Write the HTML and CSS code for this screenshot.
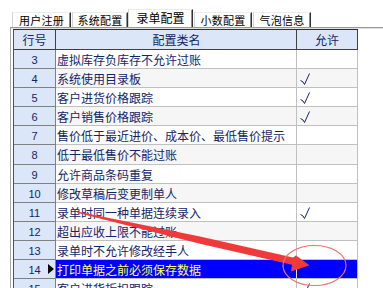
FILE: index.html
```html
<!DOCTYPE html>
<html lang="zh-CN">
<head>
  <meta charset="UTF-8">
  <title>录单配置</title>
  <link rel="stylesheet" href="styles.css">
</head>
<body>
  <div class="tabs">
    <div class="tab t1">用户注册</div>
    <div class="tab t2">系统配置</div>
    <div class="tab active">录单配置</div>
    <div class="tab t4">小数配置</div>
    <div class="tab t5">气泡信息</div>
  </div>
  <div class="panel">
    <div class="grid">
      <div class="row head">
        <div class="cell num">行号</div>
        <div class="cell name">配置类名</div>
        <div class="cell allow">允许</div>
      </div>
      <div class="row odd"><div class="cell num">3</div><div class="cell name">虚拟库存负库存不允许过账</div><div class="cell allow"></div></div>
      <div class="row even"><div class="cell num">4</div><div class="cell name">系统使用目录板</div><div class="cell allow"><svg class="tick" viewBox="0 0 10 12"><path d="M0.5 7.5 L3 9 L4.5 11.5 L9.5 0.5"/></svg></div></div>
      <div class="row odd"><div class="cell num">5</div><div class="cell name">客户进货价格跟踪</div><div class="cell allow"><svg class="tick" viewBox="0 0 10 12"><path d="M0.5 7.5 L3 9 L4.5 11.5 L9.5 0.5"/></svg></div></div>
      <div class="row even"><div class="cell num">6</div><div class="cell name">客户销售价格跟踪</div><div class="cell allow"><svg class="tick" viewBox="0 0 10 12"><path d="M0.5 7.5 L3 9 L4.5 11.5 L9.5 0.5"/></svg></div></div>
      <div class="row odd"><div class="cell num">7</div><div class="cell name">售价低于最近进价、成本价、最低售价提示</div><div class="cell allow"></div></div>
      <div class="row even"><div class="cell num">8</div><div class="cell name">低于最低售价不能过账</div><div class="cell allow"></div></div>
      <div class="row odd"><div class="cell num">9</div><div class="cell name">允许商品条码重复</div><div class="cell allow"></div></div>
      <div class="row even"><div class="cell num">10</div><div class="cell name">修改草稿后变更制单人</div><div class="cell allow"></div></div>
      <div class="row odd"><div class="cell num">11</div><div class="cell name">录单时同一种单据连续录入</div><div class="cell allow"><svg class="tick" viewBox="0 0 10 12"><path d="M0.5 7.5 L3 9 L4.5 11.5 L9.5 0.5"/></svg></div></div>
      <div class="row even"><div class="cell num">12</div><div class="cell name">超出应收上限不能过账</div><div class="cell allow"></div></div>
      <div class="row odd"><div class="cell num">13</div><div class="cell name">录单时不允许修改经手人</div><div class="cell allow"></div></div>
      <div class="row sel"><div class="cell num">14<span class="pointer"></span></div><div class="cell name">打印单据之前必须保存数据</div><div class="cell allow"></div></div>
      <div class="row odd"><div class="cell num">15</div><div class="cell name">客户进货折扣跟踪</div><div class="cell allow"><svg class="tick" viewBox="0 0 10 12"><path d="M0.5 7.5 L3 9 L4.5 11.5 L9.5 0.5"/></svg></div></div>
    </div>
  </div>

  <!-- red annotation drawn over the screenshot -->
  <svg class="marks" width="383" height="288" viewBox="0 0 383 288">
    <polygon class="arrow" points="76,211.3 200,236.6 293,257.6 296,255.5 309.5,265.3 291,271.5 292,264.8 200,243.8 78,213"/>
    <ellipse class="ring" cx="314.5" cy="265.5" rx="31.5" ry="20"/>
  </svg>
</body>
</html>
```

FILE: styles.css
```css
* {
  box-sizing: border-box;
}
body {
  margin: 0;
  width: 383px;
  height: 288px;
  overflow: hidden;
  position: relative;
  background: #fff;
  font-family: "Noto Sans CJK SC", sans-serif;
  color: #14246a;
}
.tabs {
  display: flex;
  align-items: flex-end;
  height: 27px;
  padding-left: 12px;
}
.tab {
  height: 15px;
  font-size: 11px;
  line-height: 14px;
  letter-spacing: 0.3px;
  color: #000;
  text-align: center;
  border-top: 1px solid #ececec;
  border-left: 1px solid #d4d4d4;
  border-right: 1px solid #303030;
  box-shadow: inset -1px 0 #909090;
  margin-right: 1px;
}
.t1 { width: 59px; }
.t2 { width: 56px; margin-right: 0; }
.tab.active {
  width: 65px;
  height: 18px;
  font-size: 12px;
  line-height: 16px;
  letter-spacing: 0;
}
.t4 { width: 58px; }
.t5 { width: 58px; }
.panel {
  margin-left: 10px;
  border-top: 1px solid #9a9a9a;
  border-left: 1px solid #a8a8a8;
  padding: 1px 0 0 2px;
  box-shadow: inset 0 1px #dedede;
  height: 300px;
}
.grid {
  width: 345px;
  border-top: 1px solid #303030;
  border-left: 1px solid #505050;
}
.row {
  display: grid;
  grid-template-columns: 42px 241px 61px;
  height: 19.1px;
}
.cell {
  border-right: 1px solid #c0c0c0;
  border-bottom: 1px solid #c0c0c0;
  font-size: 12px;
  line-height: 18px;
  white-space: nowrap;
  overflow: hidden;
}
.cell.name {
  padding: 1px 0 0 1px;
}
.cell.num {
  position: relative;
  background: #dbe7f8;
  border-color: #808080;
  text-align: center;
  font-family: "Liberation Sans", sans-serif;
  font-size: 11px;
  padding-top: 1px;
}
.row.head {
  height: 20px;
}
.head .cell {
  background: #dbe7f8;
  border-color: #404040;
  text-align: center;
  font-family: "Noto Sans CJK SC", sans-serif;
  font-size: 12px;
  padding-top: 1px;
}
.even .name,
.even .allow {
  background: #f6f6f6;
}
.sel .name,
.sel .allow {
  background: #0000ff;
  color: #ffff66;
}
.sel .name {
  border-right-color: #e4e4a8;
}
.pointer {
  position: absolute;
  right: 1px;
  top: 4px;
  border-left: 6px solid #000;
  border-top: 5px solid transparent;
  border-bottom: 5px solid transparent;
}
.tick {
  display: block;
  width: 10px;
  height: 12px;
  margin: 4px 0 0 3px;
  fill: none;
  stroke: #14246a;
  stroke-width: 1;
}
.marks {
  position: absolute;
  left: 0;
  top: 0;
  pointer-events: none;
}
.arrow {
  fill: #f03a3a;
}
.ring {
  fill: none;
  stroke: #f07272;
  stroke-width: 1.2;
}
```
